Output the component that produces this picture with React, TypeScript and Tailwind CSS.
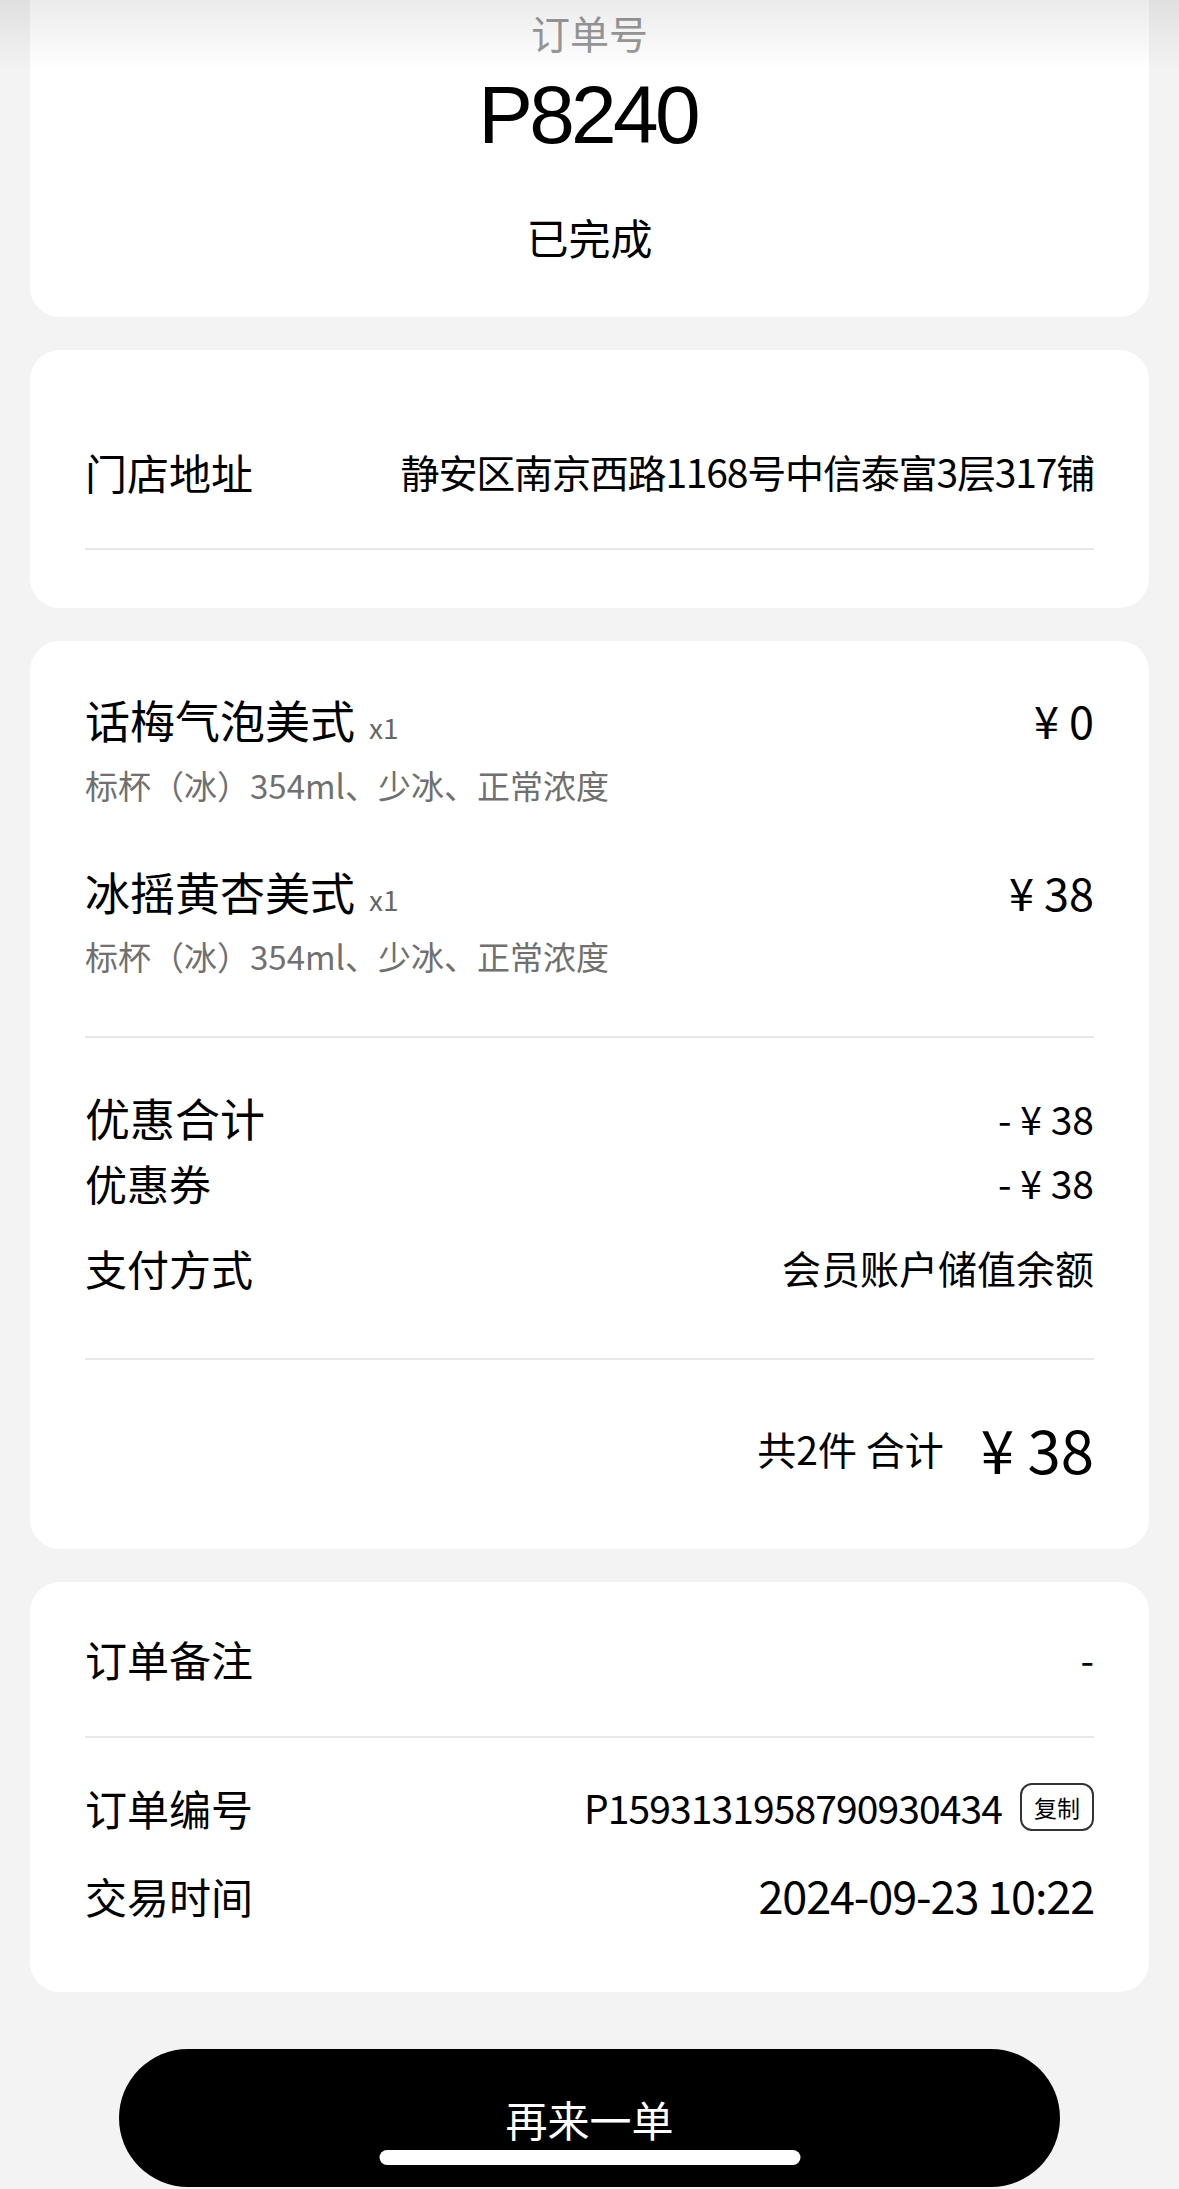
const items = [
  { name: "话梅气泡美式", qty: "x1", spec: "标杯（冰）354ml、少冰、正常浓度", price: "¥ 0" },
  { name: "冰摇黄杏美式", qty: "x1", spec: "标杯（冰）354ml、少冰、正常浓度", price: "¥ 38" },
];

function Divider({ className = "" }: { className?: string }) {
  return <div className={`h-[2px] bg-[#e8e8e8] ${className}`} />;
}

export default function App() {
  return (
    <div className="relative min-h-[2189px] overflow-hidden bg-[#f3f3f3] font-['Noto_Sans_CJK_SC',sans-serif] text-black">
      {/* shadow from the header above */}
      <div className="pointer-events-none absolute inset-x-0 top-0 z-10 h-[70px] bg-linear-to-b from-black/[0.08] to-transparent" />

      <div className="flex flex-col gap-[33px] px-[30px]">
        {/* order number */}
        <section className="flex flex-col items-center rounded-b-[30px] bg-white pt-[6px] pb-[50px]">
          <div className="flex h-[52px] items-center text-[39px] leading-none text-[#999]">订单号</div>
          <div className="mt-[7px] flex h-[100px] items-center pr-[4px] font-['Liberation_Sans',sans-serif] text-[82px] leading-none tracking-[-0.045em]">
            P8240
          </div>
          <div className="mt-[42px] flex h-[60px] items-center text-[42px] leading-none">已完成</div>
        </section>

        {/* store */}
        <section className="rounded-[30px] bg-white px-[55px] pt-[91px] pb-[58px]">
          <div className="flex h-[60px] items-center justify-between">
            <span className="text-[42px]">门店地址</span>
            <span className="text-[39px] tracking-[-0.03em]">静安区南京西路1168号中信泰富3层317铺</span>
          </div>
          <Divider className="mt-[47px]" />
        </section>

        {/* items + payment */}
        <section className="rounded-[30px] bg-white px-[55px] pt-[49px] pb-[61px]">
          {items.map((it, i) => (
            <div key={it.name} className={i > 0 ? "mt-[51px]" : ""}>
              <div className="flex h-[60px] items-center justify-between">
                <div className="flex items-baseline">
                  <span className="text-[45px]">{it.name}</span>
                  <span className="ml-[14px] text-[28px] text-[#666]">{it.qty}</span>
                </div>
                <span className="text-[45px]">{it.price}</span>
              </div>
              <div className={`flex h-[50px] items-center text-[33px] text-[#707070] ${i > 0 ? "mt-[10px]" : "mt-[11px]"}`}>
                {it.spec}
              </div>
            </div>
          ))}

          <Divider className="mt-[54px]" />

          <div className="mt-[50px] flex h-[60px] items-center justify-between">
            <span className="text-[45px]">优惠合计</span>
            <span className="text-[39px]">- ¥ 38</span>
          </div>
          <div className="mt-[4px] flex h-[60px] items-center justify-between">
            <span className="text-[42px]">优惠券</span>
            <span className="text-[39px]">- ¥ 38</span>
          </div>
          <div className="mt-[25px] flex h-[60px] items-center justify-between">
            <span className="text-[42px]">支付方式</span>
            <span className="text-[39px]">会员账户储值余额</span>
          </div>

          <Divider className="mt-[61px]" />

          <div className="mt-[48px] flex h-[80px] items-center justify-end">
            <span className="text-[39px]">共2件 合计</span>
            <span className="ml-[37px] text-[60px]">¥ 38</span>
          </div>
        </section>

        {/* remarks / meta */}
        <section className="rounded-[30px] bg-white px-[55px] pt-[46px] pb-[67px]">
          <div className="flex h-[60px] items-center justify-between">
            <span className="text-[42px]">订单备注</span>
            <span className="text-[39px]">-</span>
          </div>
          <Divider className="mt-[48px]" />
          <div className="mt-[39px] flex h-[60px] items-center justify-between">
            <span className="text-[42px]">订单编号</span>
            <div className="flex items-center gap-[18px]">
              <span className="text-[39px] tracking-[-0.023em]">P1593131958790930434</span>
              <button className="flex h-[48px] w-[74px] items-center justify-center rounded-[12px] border-[2px] border-[#333] text-[23px]">
                复制
              </button>
            </div>
          </div>
          <div className="mt-[28px] flex h-[60px] items-center justify-between">
            <span className="text-[42px]">交易时间</span>
            <span className="text-[45px] tracking-[-0.025em]">2024-09-23 10:22</span>
          </div>
        </section>
      </div>

      {/* bottom action */}
      <div className="mt-[57px] px-[119px]">
        <button className="flex h-[138px] w-full items-center justify-center rounded-full bg-black text-[42px] text-white">
          再来一单
        </button>
      </div>

      {/* home indicator */}
      <div className="absolute bottom-[24px] left-1/2 h-[15px] w-[421px] -translate-x-1/2 rounded-full bg-white" />
    </div>
  );
}
